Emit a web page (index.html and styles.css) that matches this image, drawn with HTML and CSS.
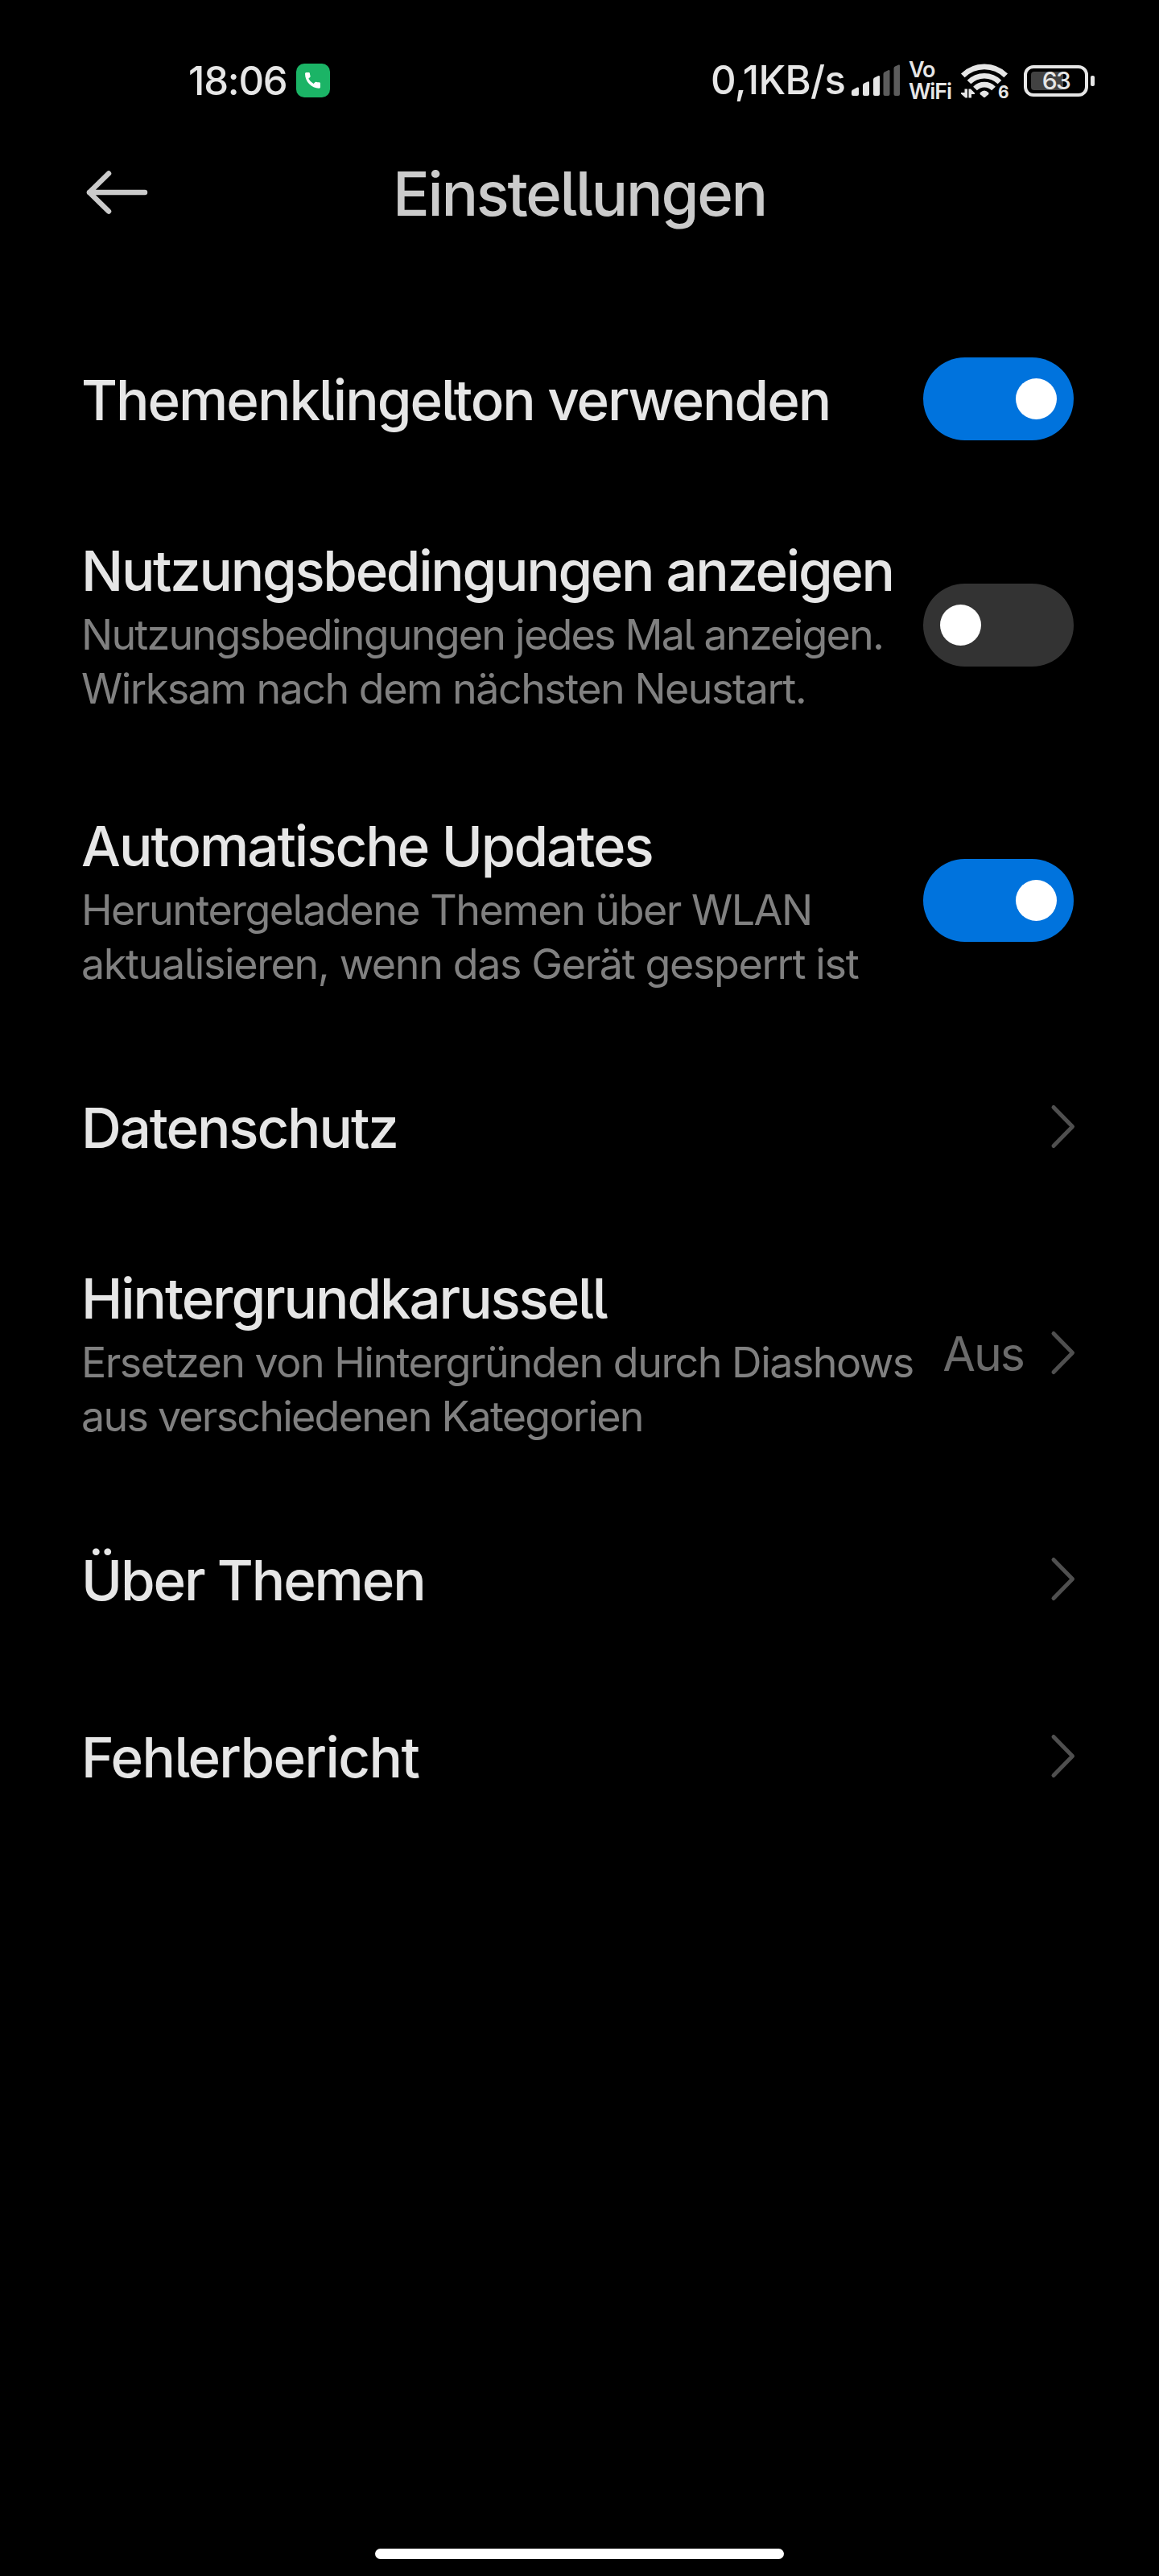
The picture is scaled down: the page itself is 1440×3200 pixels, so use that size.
FILE: index.html
```html
<!DOCTYPE html>
<html lang="de">

<head>
    <meta charset="UTF-8">
    <meta name="viewport" content="width=device-width, initial-scale=1.0">
    <title>Einstellungen</title>
    <link rel="stylesheet" href="styles.css">
</head>

<body>
    <div id="statusbar">
        <span id="clock">18:06</span>
        <svg id="callBadge" width="42" height="42" viewBox="0 0 42 42">
            <rect width="42" height="42" rx="10" fill="#1bb466"/>
            <path d="M11 12.500a1.500 1.500 0 0 1 1.500-1.500h3.200a1.200 1.200 0 0 1 1.200 1c.1 1.300.3 2.400.7 3.500.1.500 0 .9-.3 1.200l-2 2.100a15 15 0 0 0 6.300 6.200l2-2a1.300 1.300 0 0 1 1.300-.3c1.100.4 2.300.6 3.500.6.900 0 1.600.6 1.600 1.300v4.500c0 .9-.7 1.600-1.600 1.600C19 30.700 11 22.500 11 12.500z" fill="#fff"/>
        </svg>
        <div id="statusRight">
            <span id="speed">0,1KB/s</span>
            <svg id="signal" width="60" height="40" viewBox="0 0 60 40">
                <g fill="#e6e6e6">
                    <path d="M0 34q0-1.500 1.500-2.400l5.500-3q2-.7 2 1V37q0 2-2 2H2q-2 0-2-2z"/>
                    <path d="M14 26q0-1.500 1.500-2.400l4.500-2.200q2-.7 2 1V37q0 2-2 2h-4q-2 0-2-2z"/>
                    <path d="M27 19q0-1.500 1.500-2.400l4.500-2.300q2-.7 2 1V37q0 2-2 2h-4q-2 0-2-2z"/>
                </g>
                <g fill="#5c5c5c">
                    <path d="M39.500 12q0-1.500 1.500-2.400l4.500-2.300q2-.7 2 1V37q0 2-2 2h-4q-2 0-2-2z"/>
                    <path d="M52.500 5q0-1.500 1.500-2.400L58.500.5q1.500-.5 1.500 1V37q0 2-2 2h-3.500q-2 0-2-2z"/>
                </g>
            </svg>
            <div id="vowifi"><span>Vo</span><span>WiFi</span></div>
            <svg id="wifi" width="60" height="42" viewBox="0 0 60 42">
                <g fill="none" stroke="#e6e6e6" stroke-width="6.600">
                    <path d="M2.300 14.800a38 38 0 0 1 53.400 0"/>
                    <path d="M10 23a27 27 0 0 1 38 0"/>
                    <path d="M17.500 31a16 16 0 0 1 23 0"/>
                </g>
                <path d="M23.800 36q5.200-5 10.400 0 1 1-.2 2.200L30 41.800q-1 .8-2 0l-4-3.600q-1.200-1.200-.2-2.200z" fill="#e6e6e6"/>
                <path d="M4.500 31.500H8v11H5.500L0 37.500v-1.500h4.500zM9.500 31.500H12l5 5V38h-4v4.500H9.500z" fill="#e6e6e6"/>
                <text x="46" y="43" class="wifiGen">6</text>
            </svg>
            <div id="battery">
                <div class="shell"><div class="level"></div><span>63</span></div>
                <div class="tip"></div>
            </div>
        </div>
    </div>

    <header>
        <svg id="back" width="77" height="54" viewBox="0 0 77 54" fill="none" stroke="#cbcbcb" stroke-width="6.500" stroke-linecap="round" stroke-linejoin="round">
            <path d="M28 3.500L4 27l24 23.500M4 27h69"/>
        </svg>
        <h1>Einstellungen</h1>
    </header>

    <main>
        <div class="row" id="ringtone">
            <div class="text"><h2>Themenklingelton verwenden</h2></div>
            <div class="toggle on"><i></i></div>
        </div>
        <div class="row double" id="terms">
            <div class="text">
                <h2>Nutzungsbedingungen anzeigen</h2>
                <p><span class="tight">Nutzungsbedingungen jedes Mal anzeigen.</span><br>Wirksam nach dem nächsten Neustart.</p>
            </div>
            <div class="toggle"><i></i></div>
        </div>
        <div class="row double" id="updates">
            <div class="text">
                <h2>Automatische Updates</h2>
                <p>Heruntergeladene Themen über WLAN<br><span class="loose">aktualisieren, wenn das Gerät gesperrt ist</span></p>
            </div>
            <div class="toggle on"><i></i></div>
        </div>
        <div class="row" id="privacy">
            <div class="text"><h2>Datenschutz</h2></div>
            <svg class="chevron" width="30" height="54" viewBox="0 0 30 54"><path d="M3 3.500l23.500 24L3 51.500"/></svg>
        </div>
        <div class="row double" id="carousel">
            <div class="text">
                <h2>Hintergrundkarussell</h2>
                <p>Ersetzen von Hintergründen durch Diashows<br><span class="tight">aus verschiedenen Kategorien</span></p>
            </div>
            <span class="value">Aus</span>
            <svg class="chevron" width="30" height="54" viewBox="0 0 30 54"><path d="M3 3.500l23.500 24L3 51.500"/></svg>
        </div>
        <div class="row" id="about">
            <div class="text"><h2>Über Themen</h2></div>
            <svg class="chevron" width="30" height="54" viewBox="0 0 30 54"><path d="M3 3.500l23.500 24L3 51.500"/></svg>
        </div>
        <div class="row" id="report">
            <div class="text"><h2>Fehlerbericht</h2></div>
            <svg class="chevron" width="30" height="54" viewBox="0 0 30 54"><path d="M3 3.500l23.500 24L3 51.500"/></svg>
        </div>
    </main>

    <div id="homeBar"></div>
</body>

</html>
```

FILE: styles.css
```css
* {
    box-sizing: border-box;
}

body {
    margin: 0;
    height: 3200px;
    display: flex;
    flex-direction: column;
    background: #000;
    color: #e6e6e6;
    font-family: Inter, "Liberation Sans", sans-serif;
    font-feature-settings: "cv05"; /* l with a tail */
    white-space: nowrap;
}

h1,
h2,
p {
    margin: 0;
}

svg {
    display: block;
    flex: none;
    overflow: visible;
}

/* status bar */
#statusbar {
    height: 160px;
    padding: 40px 80px 0 234px;
    display: flex;
    align-items: center;
}

#clock,
#speed {
    font-size: 49px;
    font-weight: 500;
    line-height: 60px;
}

#clock {
    width: 134px;
    padding-top: 1px;
    letter-spacing: -1.2px;
}

#statusRight {
    margin-left: auto;
    display: flex;
    align-items: center;
}

#speed {
    width: 175px;
    letter-spacing: -0.6px;
}

#signal {
    margin-right: 11px;
}

#vowifi {
    width: 65px;
    display: flex;
    flex-direction: column;
    font-size: 27px;
    font-weight: 600;
    line-height: 27px;
    letter-spacing: -1.2px;
}

#wifi {
    margin-right: 18px;
}

.wifiGen {
    font-size: 21px;
    font-weight: 700;
    fill: #e6e6e6;
}

#battery {
    display: flex;
    align-items: center;
    gap: 3px;
}

#battery .shell {
    position: relative;
    width: 80px;
    height: 39px;
    border: 4px solid #e6e6e6;
    border-radius: 12px;
    display: flex;
    align-items: center;
    justify-content: center;
    font-size: 30px;
    font-weight: 500;
    letter-spacing: -1.5px;
}

#battery .shell span {
    position: relative;
}

#battery .level {
    position: absolute;
    left: 5px;
    top: 4px;
    width: 40px;
    height: 23px;
    border-radius: 4px;
    background: #424242;
}

#battery .tip {
    width: 5px;
    height: 13px;
    border-radius: 2px;
    background: #e6e6e6;
}

/* title bar */
header {
    height: 225px;
    padding: 0 107px;
    display: grid;
    grid-template-columns: 77px 1fr 77px;
}

#back {
    margin-top: 52px;
}

h1 {
    margin-top: 34px;
    font-size: 76px;
    font-weight: 500;
    line-height: 92px;
    letter-spacing: -2.3px;
    text-align: center;
    color: #cbcbcb;
}

/* settings list */
.row {
    height: 220px;
    padding: 0 106px 0 101px;
    display: flex;
    align-items: center;
}

.row.double {
    height: 342px;
}

.text {
    flex: 1;
    padding-top: 4px;
}

h2 {
    font-size: 69px;
    font-weight: 500;
    line-height: 84px;
    letter-spacing: -2px;
}

#terms h2 {
    letter-spacing: -2.3px;
}

#privacy h2,
#about h2 {
    letter-spacing: -2.1px;
}

#carousel h2 {
    letter-spacing: -2.1px;
}

#report h2 {
    letter-spacing: -1.6px;
}

p {
    padding-top: 4px;
    font-size: 52px;
    line-height: 67px;
    letter-spacing: -1.52px;
    color: #808080;
}

.tight {
    letter-spacing: -1.78px;
}

.loose {
    letter-spacing: -1.38px;
}

.value {
    margin-right: 34px;
    padding-top: 3px;
    font-size: 59px;
    letter-spacing: -2px;
    color: #6b6b6b;
}

.chevron {
    fill: none;
    stroke: #4f4f4f;
    stroke-width: 5;
    stroke-linecap: round;
    stroke-linejoin: round;
    margin-right: -2px;
}

.toggle {
    width: 187px;
    height: 103px;
    padding: 0 21px;
    display: flex;
    align-items: center;
    border-radius: 52px;
    background: #333;
}

.toggle.on {
    justify-content: flex-end;
    background: #0073dd;
}

.toggle i {
    width: 51px;
    height: 51px;
    border-radius: 50%;
    background: #fff;
}

#homeBar {
    width: 508px;
    height: 13px;
    margin: auto auto 21px;
    border-radius: 7px;
    background: #fff;
}
```
